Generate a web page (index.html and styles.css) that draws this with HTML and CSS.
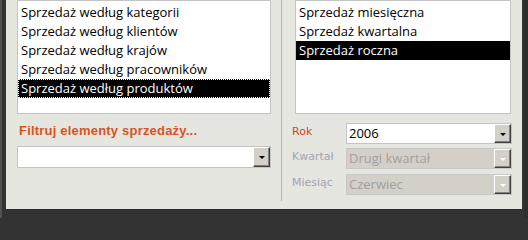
FILE: index.html
```html
<!DOCTYPE html>
<html lang="pl">
<head>
<meta charset="utf-8">
<link rel="stylesheet" href="styles.css">
</head>
<body>
<div class="frame">
  <div class="panel">
    <div class="col-left">
      <div class="listbox lb-left">
        <div class="item">Sprzedaż według kategorii</div>
        <div class="item">Sprzedaż według klientów</div>
        <div class="item">Sprzedaż według krajów</div>
        <div class="item">Sprzedaż według pracowników</div>
        <div class="item selected focus">Sprzedaż według produktów</div>
      </div>
      <div class="filter-label">Filtruj elementy sprzedaży...</div>
      <div class="combo combo-filter">
        <span class="combo-text"></span>
        <span class="combo-btn"><span class="arrow"></span></span>
      </div>
    </div>
    <div class="sep"></div>
    <div class="col-right">
      <div class="listbox lb-right">
        <div class="item">Sprzedaż miesięczna</div>
        <div class="item">Sprzedaż kwartalna</div>
        <div class="item selected">Sprzedaż roczna</div>
      </div>
      <div class="fields">
        <div class="row">
          <span class="lbl lbl-active">Rok</span>
          <div class="combo">
            <span class="combo-text">2006</span>
            <span class="combo-btn"><span class="arrow"></span></span>
          </div>
        </div>
        <div class="row row-2">
          <span class="lbl lbl-disabled">Kwartał</span>
          <div class="combo disabled">
            <span class="combo-text">Drugi kwartał</span>
            <span class="combo-btn"><span class="arrow"></span></span>
          </div>
        </div>
        <div class="row row-3">
          <span class="lbl lbl-disabled">Miesiąc</span>
          <div class="combo disabled">
            <span class="combo-text">Czerwiec</span>
            <span class="combo-btn"><span class="arrow"></span></span>
          </div>
        </div>
      </div>
    </div>
  </div>
</div>
</body>
</html>
```
FILE: styles.css
```css
html, body {
  margin: 0;
  padding: 0;
  background: #333333;
}
body {
  width: 528px;
  height: 218px;
  overflow: hidden;
}
.frame {
  box-sizing: border-box;
  height: 218px;
  display: flex;
  padding: 0 6px 8px 4px;
  border-left: 2px solid #505050;
  background: #333333;
  box-shadow: inset -4px 0 0 #2e2e2e;
}
.panel {
  flex: 1;
  display: flex;
  background: #e6e6e1;
  padding: 0 10px 8px 11px;
  border-bottom: 1px solid #2b2b2b;
}
.col-left {
  width: 254px;
  display: flex;
  flex-direction: column;
}
.sep {
  width: 1px;
  margin-left: 10px;
  background: #b9b9b4;
}
.col-right {
  margin-left: 10px;
  flex: 1;
  display: flex;
  flex-direction: column;
}
.listbox {
  box-sizing: border-box;
  height: 114px;
  background: #ffffff;
  border: 1px solid #c4c4c4;
  padding-top: 2px;
  font-family: "Open Sans", "Noto Sans", sans-serif;
  font-size: 13px;
  color: #000;
}
.lb-right {
  margin-left: 3px;
  margin-right: 1px;
}
.item {
  height: 19px;
  line-height: 19px;
  padding-left: 3px;
  white-space: nowrap;
}
.item.selected {
  background: #000;
  color: #fff;
}
.item.focus {
  outline: 1px dotted #ffffff;
  outline-offset: -1px;
}
.filter-label {
  margin: 9px 0 0 2px;
  line-height: 15px;
  font-family: "Liberation Sans", Arial, sans-serif;
  font-weight: bold;
  font-size: 13px;
  letter-spacing: 0.2px;
  color: #d9531e;
}
.combo {
  box-sizing: border-box;
  display: flex;
  align-items: stretch;
  background: #fff;
  border: 1px solid #c4c4c4;
  height: 21px;
  flex: 1;
}
.combo-filter {
  flex: none;
  height: 22px;
  margin-top: 8px;
}
.combo-text {
  flex: 1;
  padding-left: 2px;
  font-family: "Open Sans", "Noto Sans", sans-serif;
  font-size: 13px;
  line-height: 19px;
  color: #000;
}
.combo-btn {
  box-sizing: border-box;
  width: 17px;
  background: #d4d0c8;
  border-top: 1px solid #ffffff;
  border-left: 1px solid #ffffff;
  border-right: 1px solid #404040;
  border-bottom: 1px solid #404040;
  box-shadow: inset -1px -1px 0 #808080;
  display: flex;
  align-items: center;
  justify-content: center;
}
.arrow {
  width: 0;
  height: 0;
  border-left: 3px solid transparent;
  border-right: 3px solid transparent;
  border-top: 3px solid #000;
  margin-top: 1px;
}
.combo.disabled {
  background: #d4d0c8;
  border-color: #c8c8c4;
}
.combo.disabled .combo-text {
  color: #a0a0a0;
}
.combo.disabled .arrow {
  border-top-color: #ffffff;
}
.fields {
  margin-top: 9px;
  display: flex;
  flex-direction: column;
}
.row {
  display: flex;
  height: 21px;
}
.row-2 {
  margin-top: 4px;
}
.row-3 {
  margin-top: 5px;
}
.lbl {
  width: 54px;
  flex: none;
  font-family: "DejaVu Sans", "Liberation Sans", sans-serif;
  font-size: 11px;
  line-height: 17px;
}
.lbl-active {
  color: #d2462a;
}
.lbl-disabled {
  color: #a4a3b0;
}
```
